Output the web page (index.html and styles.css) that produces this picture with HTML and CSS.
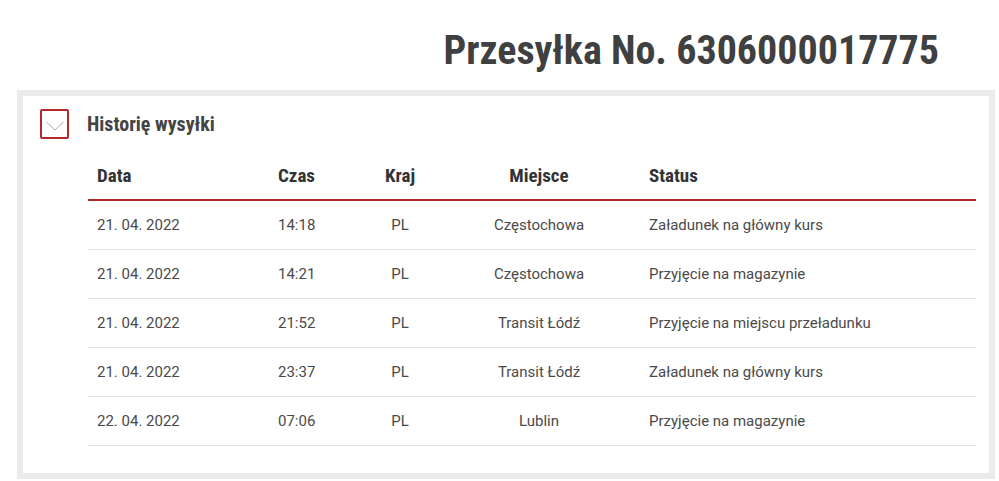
FILE: index.html
```html
<!DOCTYPE html>
<html lang="pl">
<head>
<meta charset="utf-8">
<title>Przesyłka</title>
<link rel="stylesheet" href="styles.css">
</head>
<body>
<div class="page">
  <h1 class="title"><span class="title-text">Przesyłka No. 6306000017775</span></h1>
  <section class="box">
    <div class="box-head">
      <span class="toggle">
        <svg width="18" height="10" viewBox="0 0 18 10"><path d="M0.5 1 L9 9 L17.5 1" fill="none" stroke="#a8a8a8" stroke-width="1"/></svg>
      </span>
      <h2 class="box-title">Historię wysyłki</h2>
    </div>
    <div class="table">
      <div class="row head">
        <div class="c c1">Data</div>
        <div class="c c2">Czas</div>
        <div class="c c3">Kraj</div>
        <div class="c c4">Miejsce</div>
        <div class="c c5">Status</div>
      </div>
      <div class="row">
        <div class="c c1">21. 04. 2022</div>
        <div class="c c2">14:18</div>
        <div class="c c3">PL</div>
        <div class="c c4">Częstochowa</div>
        <div class="c c5">Załadunek na główny kurs</div>
      </div>
      <div class="row">
        <div class="c c1">21. 04. 2022</div>
        <div class="c c2">14:21</div>
        <div class="c c3">PL</div>
        <div class="c c4">Częstochowa</div>
        <div class="c c5">Przyjęcie na magazynie</div>
      </div>
      <div class="row">
        <div class="c c1">21. 04. 2022</div>
        <div class="c c2">21:52</div>
        <div class="c c3">PL</div>
        <div class="c c4">Transit Łódź</div>
        <div class="c c5">Przyjęcie na miejscu przeładunku</div>
      </div>
      <div class="row">
        <div class="c c1">21. 04. 2022</div>
        <div class="c c2">23:37</div>
        <div class="c c3">PL</div>
        <div class="c c4">Transit Łódź</div>
        <div class="c c5">Załadunek na główny kurs</div>
      </div>
      <div class="row">
        <div class="c c1">22. 04. 2022</div>
        <div class="c c2">07:06</div>
        <div class="c c3">PL</div>
        <div class="c c4">Lublin</div>
        <div class="c c5">Przyjęcie na magazynie</div>
      </div>
    </div>
  </section>
</div>
</body>
</html>
```
FILE: styles.css
```css
* { box-sizing: border-box; }
html, body { margin: 0; padding: 0; background: #fff; }
body { font-family: Roboto, "Noto Sans", sans-serif; color: #444; }
.page { padding: 0 4px 0 17px; }
.title {
  margin: 0;
  height: 90px;
  padding: 27px 56px 0 0;
  text-align: right;
  font-family: Roboto, sans-serif;
  font-weight: 700;
  font-size: 40px;
  line-height: 48px;
  font-stretch: 75%;
  color: #404040;
  letter-spacing: 0;
}
.box {
  border: 6px solid #ebebeb;
  height: 389px;
  padding: 13px 13px 0 17px;
}
.box-head { display: flex; align-items: center; gap: 18px; height: 30px; }
.toggle {
  width: 29px; height: 30px;
  border: 2px solid #b3282d;
  border-radius: 2px;
  display: flex; align-items: center; justify-content: center;
  padding-top: 3px;
}
.box-title {
  margin: 0;
  font-size: 20px;
  font-weight: 700;
  font-stretch: 75%;
  color: #444;
}
.table { margin: 12px 0 0 48px; }
.row {
  display: grid;
  grid-template-columns: 181px 91px 80px 198px 1fr;
  height: 49px;
  align-items: center;
  border-bottom: 1px solid #e2e2e2;
  font-size: 15px;
  color: #4a4a4a;
}
.row.head {
  height: 50px;
  padding-top: 1px;
  border-bottom: 2px solid #b3282d;
  font-size: 19px;
  font-weight: 700;
  font-stretch: 75%;
  color: #333;
}
.c { padding: 0 9px; white-space: nowrap; }
.c3, .c4 { text-align: center; padding: 0; }
.c5 { padding-left: 11px; }
```
